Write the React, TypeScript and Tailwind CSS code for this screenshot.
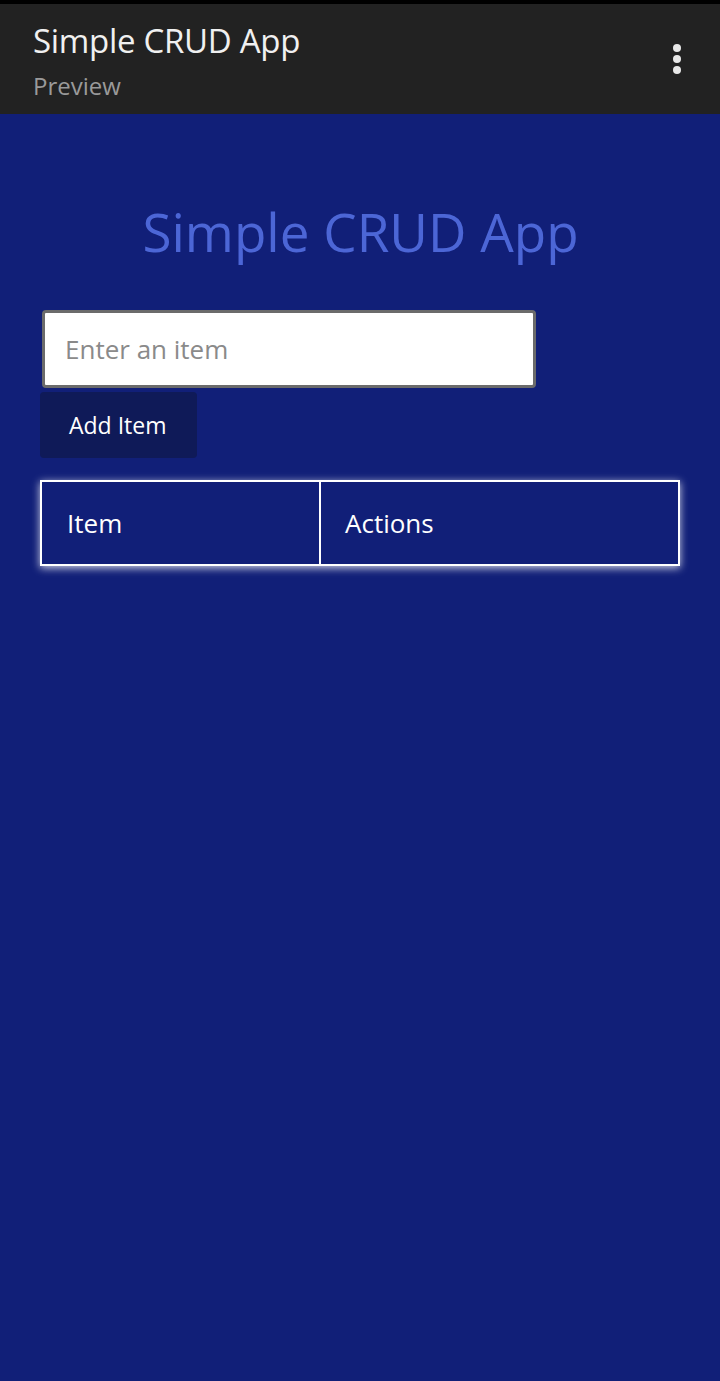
import React, { useState } from "react";

const font = { fontFamily: '"Open Sans", "Noto Sans", sans-serif' };

export default function App() {
  const [value, setValue] = useState("");
  const [items, setItems] = useState<string[]>([]);

  const addItem = () => {
    if (!value.trim()) return;
    setItems([...items, value.trim()]);
    setValue("");
  };

  return (
    <div className="min-h-[1381px] w-[720px] bg-[#111f78] flex flex-col" style={font}>
      <div className="h-[4px] bg-black" />
      <header className="h-[110px] bg-[#222222] flex items-start justify-between pl-[33px] pr-[39px]">
        <div className="flex flex-col pt-[16px]">
          <span className="text-[33px] leading-[42px] text-[#f0f0f0] tracking-[-0.3px]">Simple CRUD App</span>
          <span className="text-[24px] leading-[30px] text-[#9a9a9a] mt-[9px]">Preview</span>
        </div>
        <div className="flex flex-col gap-[3px] pt-[40px]">
          <span className="w-[8px] h-[8px] rounded-full bg-[#e8e8e8]" />
          <span className="w-[8px] h-[8px] rounded-full bg-[#e8e8e8]" />
          <span className="w-[8px] h-[8px] rounded-full bg-[#e8e8e8]" />
        </div>
      </header>

      <main className="px-[40px] flex flex-col">
        <h1 className="text-center text-[53px] leading-[64px] text-[#4c66d6] mt-[86px] ml-[1px]">
          Simple CRUD App
        </h1>

        <input
          value={value}
          onChange={(e) => setValue(e.target.value)}
          placeholder="Enter an item"
          className="mt-[46px] ml-[2px] w-[494px] h-[78px] bg-white rounded-[4px] border-[3px] border-[#6b6b6b] px-[20px] text-[26px] text-[#333] placeholder:text-[#8a8a8a] outline-none"
        />
        <button
          onClick={addItem}
          className="mt-[4px] w-[157px] h-[66px] bg-[#0f1a58] rounded-[4px] text-white text-[23px] text-left pl-[29px]"
        >
          Add Item
        </button>

        <table className="mt-[22px] w-[640px] border-collapse border-2 border-white shadow-[0_2px_8px_rgba(255,255,255,0.8)]">
          <thead>
            <tr className="h-[84px]">
              <th className="w-[279px] border-2 border-white text-left font-normal text-white text-[26px] pl-[25px]">Item</th>
              <th className="border-2 border-white text-left font-normal text-white text-[26px] pl-[24px]">Actions</th>
            </tr>
          </thead>
          <tbody>
            {items.map((item, i) => (
              <tr key={i}>
                <td className="border-2 border-white text-white text-[22px] px-[25px] py-[12px]">{item}</td>
                <td className="border-2 border-white px-[24px] py-[12px]">
                  <button
                    onClick={() => setItems(items.filter((_, j) => j !== i))}
                    className="text-white text-[20px] bg-[#0f1a58] rounded-[4px] px-3 py-1"
                  >
                    Delete
                  </button>
                </td>
              </tr>
            ))}
          </tbody>
        </table>
      </main>
    </div>
  );
}
